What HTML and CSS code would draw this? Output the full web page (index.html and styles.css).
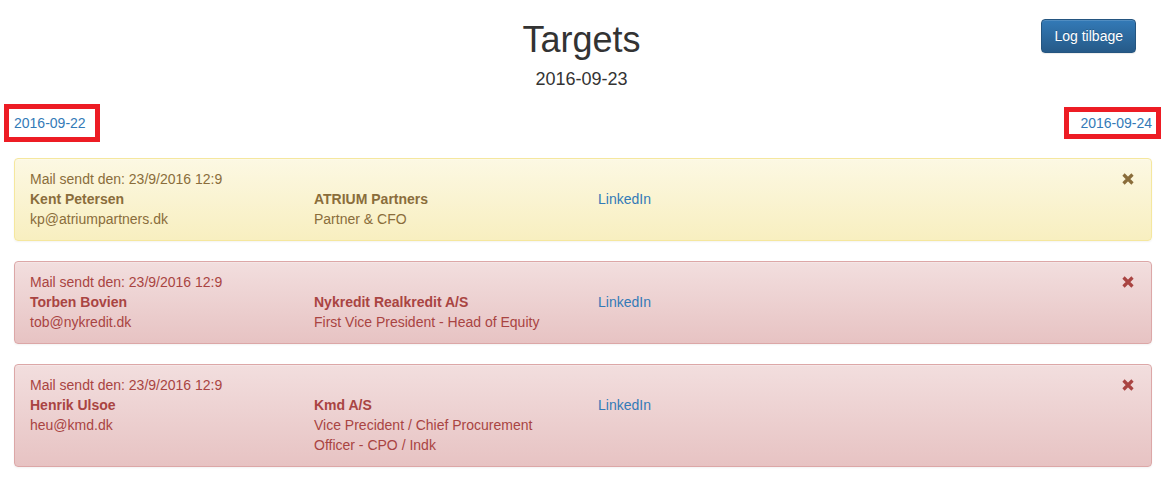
FILE: index.html
```html
<!DOCTYPE html>
<html lang="da">
  <head>
    <meta charset="UTF-8" />
    <meta name="viewport" content="width=device-width, initial-scale=1.0" />
    <title>Targets</title>
    <link rel="stylesheet" href="styles.css">
  </head>
  <body>
    <div class="pageHead">
      <div></div>
      <div class="titleBlock">
        <h1>Targets</h1>
        <h4>2016-09-23</h4>
      </div>
      <button class="btnPrimary">Log tilbage</button>
    </div>

    <div class="dateNav">
      <a href="#" class="dateLink prev">2016-09-22</a>
      <a href="#" class="dateLink next">2016-09-24</a>
    </div>

    <div class="alerts">
      <div class="alert warning">
        <div class="alertTop">
          <span>Mail sendt den: 23/9/2016 12:9</span>
          <svg class="remove" width="12" height="12" viewBox="0 0 12 12"><path d="M1.5 1.5 L10.5 10.5 M10.5 1.5 L1.5 10.5" /></svg>
        </div>
        <div class="row">
          <div>
            <strong>Kent Petersen</strong><br>
            kp@atriumpartners.dk
          </div>
          <div>
            <strong>ATRIUM Partners</strong><br>
            Partner &amp; CFO
          </div>
          <div><a href="#">LinkedIn</a></div>
        </div>
      </div>

      <div class="alert danger">
        <div class="alertTop">
          <span>Mail sendt den: 23/9/2016 12:9</span>
          <svg class="remove" width="12" height="12" viewBox="0 0 12 12"><path d="M1.5 1.5 L10.5 10.5 M10.5 1.5 L1.5 10.5" /></svg>
        </div>
        <div class="row">
          <div>
            <strong>Torben Bovien</strong><br>
            tob@nykredit.dk
          </div>
          <div>
            <strong>Nykredit Realkredit A/S</strong><br>
            First Vice President - Head of Equity
          </div>
          <div><a href="#">LinkedIn</a></div>
        </div>
      </div>

      <div class="alert danger">
        <div class="alertTop">
          <span>Mail sendt den: 23/9/2016 12:9</span>
          <svg class="remove" width="12" height="12" viewBox="0 0 12 12"><path d="M1.5 1.5 L10.5 10.5 M10.5 1.5 L1.5 10.5" /></svg>
        </div>
        <div class="row">
          <div>
            <strong>Henrik Ulsoe</strong><br>
            heu@kmd.dk
          </div>
          <div>
            <strong>Kmd A/S</strong><br>
            Vice Precident / Chief Procurement Officer - CPO / Indk
          </div>
          <div><a href="#">LinkedIn</a></div>
        </div>
      </div>
    </div>
  </body>
</html>
```

FILE: styles.css
```css
* {
  box-sizing: border-box;
}
body {
  margin: 0;
  font-family: "Liberation Sans", Arial, sans-serif;
  font-size: 14px;
  line-height: 20px;
  color: #333;
  background-color: #fff;
}
a {
  color: #337ab7;
  text-decoration: none;
}

.pageHead {
  display: grid;
  grid-template-columns: 1fr auto 1fr;
  align-items: start;
}
.titleBlock {
  text-align: center;
}
.titleBlock h1 {
  margin: 20px 0 10px;
  font-size: 36px;
  font-weight: 500;
  line-height: 1.1;
}
.titleBlock h4 {
  margin: 10px 0 10px;
  font-size: 18px;
  font-weight: 500;
  line-height: 1.1;
}
.btnPrimary {
  justify-self: end;
  margin: 19px 27px 0 0;
  height: 34px;
  padding: 6px 12px;
  font-family: inherit;
  font-size: 14px;
  line-height: 20px;
  color: #fff;
  background-image: linear-gradient(to bottom, #337ab7 0, #265a88 100%);
  border: 1px solid #245580;
  border-radius: 4px;
  text-shadow: 0 -1px 0 rgba(0, 0, 0, 0.2);
  box-shadow: inset 0 1px 0 rgba(255, 255, 255, 0.15), 0 1px 1px rgba(0, 0, 0, 0.075);
  cursor: pointer;
}

.dateNav {
  display: flex;
  justify-content: space-between;
  align-items: center;
  margin: 5px 2px 16px 4px;
  height: 38px;
}
.dateLink {
  border: 5px solid #ed1c24;
}
.dateLink.prev {
  padding: 4px 9px 4px 5px;
}
.dateLink.next {
  padding: 1px 4px 1px 11px;
}

.alerts {
  margin: 0 11px 0 14px;
}
.alert {
  padding: 10px 15px 11px;
  margin-bottom: 20px;
  border: 1px solid transparent;
  border-radius: 4px;
  box-shadow: inset 0 1px 0 rgba(255, 255, 255, 0.25), 0 1px 2px rgba(0, 0, 0, 0.05);
}
.alert.warning {
  color: #8a6d3b;
  background-image: linear-gradient(to bottom, #fcf8e3 0, #f8efc0 100%);
  border-color: #f5e79e;
}
.alert.danger {
  color: #a94442;
  background-image: linear-gradient(to bottom, #f2dede 0, #e7c3c3 100%);
  border-color: #dca7a7;
}
.alertTop {
  display: flex;
  justify-content: space-between;
  align-items: center;
}
.remove {
  margin-right: 2px;
}
.remove path {
  stroke: currentColor;
  stroke-width: 3.2;
  fill: none;
}
.row {
  display: grid;
  grid-template-columns: repeat(4, 1fr);
  column-gap: 30px;
}
.row strong {
  font-weight: 700;
}
```
